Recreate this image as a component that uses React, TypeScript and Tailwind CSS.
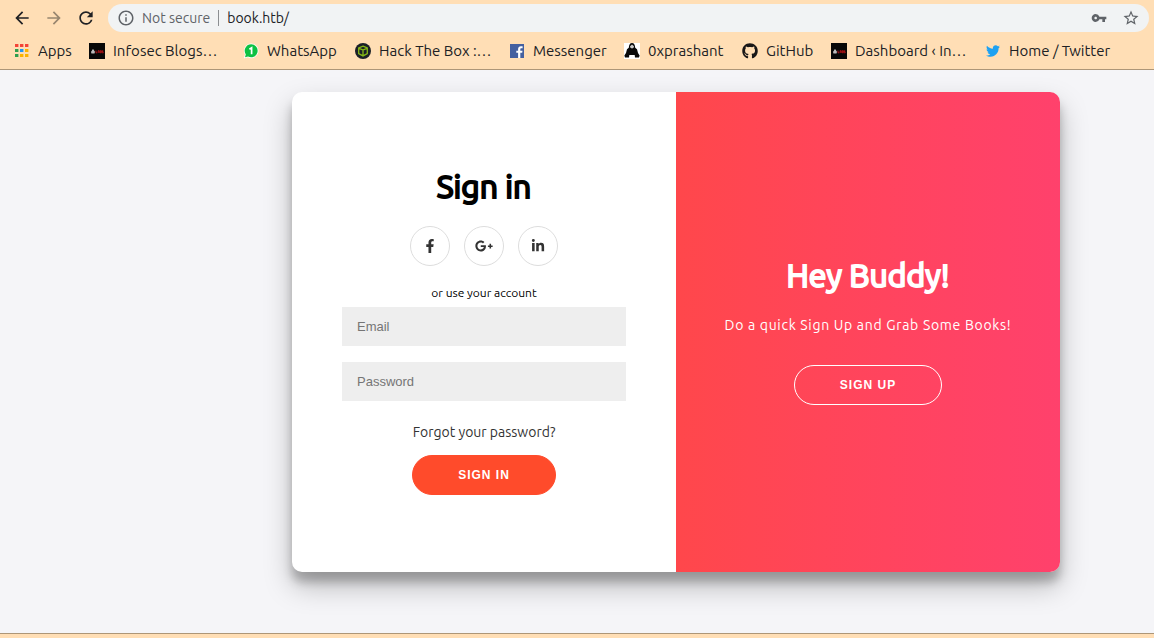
import type { ReactNode } from "react";
import { FaFacebookF, FaGithub, FaGooglePlusG, FaLinkedinIn, FaTwitter } from "react-icons/fa";
import { MdArrowBack, MdArrowForward, MdInfoOutline, MdRefresh, MdStarBorder, MdVpnKey } from "react-icons/md";

function AppsIcon() {
  const colors = ["#f44336", "#f44336", "#f44336", "#2f9e4f", "#2196f3", "#fbb300", "#2f9e4f", "#fbb300", "#fbb300"];
  return (
    <svg viewBox="0 0 16 16" className="size-4" aria-hidden="true">
      {colors.map((c, i) => (
        <rect key={i} x={1 + (i % 3) * 5} y={1 + Math.floor(i / 3) * 5} width="3.4" height="3" fill={c} />
      ))}
    </svg>
  );
}

function InfosecIcon() {
  return (
    <svg viewBox="0 0 16 16" className="size-4" aria-hidden="true">
      <rect width="16" height="16" fill="#080808" />
      <path d="M3.2 6.600h1.600l.4 1.200.8 1-.5 1.600H2.400L2 8.800l.9-1z" fill="#bbb" />
      <path d="M7 7.600v2.200h1.300M9.200 9.900V7.700h1v2.200M11.300 7.700v2.100h1V7.700zM14.200 7.800h-1v1h1v1h-1" fill="none" stroke="#d3171c" strokeWidth="0.8" />
    </svg>
  );
}

function WhatsAppIcon() {
  return (
    <svg viewBox="0 0 16 16" className="size-4" aria-hidden="true">
      <path d="M8.200.5a7.300 7.300 0 1 1-3.300 13.800L.8 15.400 2 11.500A7.300 7.300 0 0 1 8.200.5z" fill="#fff" />
      <path d="M8.200 1.300a6.500 6.500 0 1 1-3.200 12.200l-3 .8.800-2.900a6.500 6.500 0 0 1 5.400-10.100z" fill="#0dc143" />
      <path d="M6.400 6.200 8.600 4.800v6.400" fill="none" stroke="#fff" strokeWidth="1.700" />
    </svg>
  );
}

function HackTheBoxIcon() {
  return (
    <svg viewBox="0 0 16 16" className="size-4" aria-hidden="true">
      <circle cx="8" cy="8" r="8" fill="#1b2027" />
      <path d="M8 3.200 12.300 5v5.600L8 12.900l-4.300-2.300V5zM3.700 5.200 8 7l4.300-1.800M8 7v5.600" fill="none" stroke="#86b817" strokeWidth="1.300" />
    </svg>
  );
}

function FacebookIcon() {
  return (
    <svg viewBox="0 0 16 16" className="size-4" aria-hidden="true">
      <rect x="1" y="1" width="14" height="14" fill="#4460a0" />
      <path d="M9.100 15V9.800H7.300V7.700h1.800V6.100c0-1.900 1.100-2.900 2.800-2.900l1.700.1v1.900h-1.200c-.9 0-1.100.4-1.100 1.100v1.400h2.200l-.3 2.100h-1.900V15z" fill="#fff" />
    </svg>
  );
}

function HackerIcon() {
  return (
    <svg viewBox="0 0 16 16" className="size-4" aria-hidden="true">
      <rect width="16" height="16" fill="#fff" />
      <path d="M8 0c2 0 3 1.500 3.200 4.800L13 6.200l1 3.800 1.600 2.400-.6 2-4 .2-.3-2.600H5.300L5 14.600l-4-.2-.6-2L2 10l1-3.800 1.800-1.400C5 1.500 6 0 8 0z" fill="#090909" />
      <path d="M6 3.200 8 1.600l2 1.600-.4 1.600L8 5.600l-1.600-.8z" fill="#ccc" />
    </svg>
  );
}

type Bookmark = { label: string; icon: ReactNode; width: string };

const bookmarks: Bookmark[] = [
  { label: "Apps", icon: <AppsIcon />, width: "w-[75px]" },
  { label: "Infosec Blogs…", icon: <InfosecIcon />, width: "w-[154px]" },
  { label: "WhatsApp", icon: <WhatsAppIcon />, width: "w-28" },
  { label: "Hack The Box :…", icon: <HackTheBoxIcon />, width: "w-[154px]" },
  { label: "Messenger", icon: <FacebookIcon />, width: "w-[115px]" },
  { label: "0xprashant", icon: <HackerIcon />, width: "w-[118px]" },
  { label: "GitHub", icon: <FaGithub className="size-4 text-[#191717]" />, width: "w-[89px]" },
  { label: "Dashboard ‹ In…", icon: <InfosecIcon />, width: "w-[154px]" },
  { label: "Home / Twitter", icon: <FaTwitter className="size-[14px] text-[#1da1f2]" />, width: "w-[130px]" },
];

function BrowserBar() {
  return (
    <header className="border-b border-[#ad9678] bg-[#ffdeb5] text-[#202124]">
      <div className="flex items-center gap-3 pt-1 pr-[5px] pl-3">
        <div className="flex gap-3">
          <button type="button" aria-label="Back">
            <MdArrowBack className="size-5" />
          </button>
          <button type="button" aria-label="Forward" className="text-[#98866f]" disabled>
            <MdArrowForward className="size-5" />
          </button>
          <button type="button" aria-label="Reload">
            <MdRefresh className="size-5" />
          </button>
        </div>
        <div className="flex h-7 flex-1 items-center rounded-full bg-[#f1f3f4] px-[9px] text-sm">
          <MdInfoOutline className="size-[18px] text-[#5f6368]" />
          <span className="ml-[7px] whitespace-nowrap text-[#5f6368]">Not secure</span>
          <span className="mx-2 h-4 w-px bg-[#8b8e91]" />
          <input aria-label="Address" defaultValue="book.htb/" className="min-w-0 flex-1 bg-transparent outline-none" />
          <button type="button" aria-label="Saved passwords" className="text-[#5f6368]">
            <MdVpnKey className="size-4" />
          </button>
          <button type="button" aria-label="Bookmark this page" className="ml-[15px] text-[#5f6368]">
            <MdStarBorder className="size-[18px]" />
          </button>
        </div>
      </div>
      <nav aria-label="Bookmarks" className="flex h-[37px] items-center pl-[14px] text-[15px] leading-5">
        {bookmarks.map((b) => (
          <a key={b.label} href="#" className={`flex shrink-0 items-center gap-2 whitespace-nowrap ${b.width}`}>
            <span className="flex w-4 shrink-0 justify-center">{b.icon}</span>
            {b.label}
          </a>
        ))}
      </nav>
    </header>
  );
}

const social = [
  { label: "Facebook", icon: <FaFacebookF className="size-[14px]" /> },
  { label: "Google Plus", icon: <FaGooglePlusG className="size-[18px]" /> },
  { label: "LinkedIn", icon: <FaLinkedinIn className="size-[14px]" /> },
];

const titleClass = "text-[32px] leading-8 font-normal [-webkit-text-stroke:2px_currentColor]";
const fieldClass =
  "h-[39px] w-full bg-[#eee] px-[15px] font-['Liberation_Sans',Arial,sans-serif] text-[13px] outline-none placeholder:text-[#757575]";
const pillClass =
  "h-10 rounded-full border px-[45px] font-['Liberation_Sans',Arial,sans-serif] text-xs font-bold tracking-[1px] text-white";

export default function App() {
  return (
    <div className="flex min-h-screen flex-col bg-[#f6f5f7] font-[Ubuntu,'Noto_Sans',sans-serif]">
      <BrowserBar />
      <main className="flex flex-1 items-start justify-center bg-[#f5f5f8] pt-[22px] pl-[198px]">
        <div className="grid min-h-[480px] w-full max-w-3xl grid-cols-2 overflow-hidden rounded-[10px] bg-white shadow-[0_14px_28px_rgba(0,0,0,0.25),0_10px_10px_rgba(0,0,0,0.22)]">
          <form className="flex flex-col items-center justify-center px-[50px] text-center" onSubmit={(e) => e.preventDefault()}>
            <h1 className={`text-black ${titleClass}`}>Sign in</h1>
            <div className="mt-6 mb-5 flex gap-[14px]">
              {social.map((s) => (
                <a
                  key={s.label}
                  href="#"
                  aria-label={s.label}
                  className="flex size-10 items-center justify-center rounded-full border border-[#ddd] text-[#333]"
                >
                  {s.icon}
                </a>
              ))}
            </div>
            <span className="text-xs leading-[14px] text-black">or use your account</span>
            <input type="email" aria-label="Email" placeholder="Email" className={`mt-[7px] ${fieldClass}`} />
            <input type="password" aria-label="Password" placeholder="Password" className={`mt-4 ${fieldClass}`} />
            <a href="#" className="mt-[21px] mb-[13px] text-sm leading-5 text-[#333]">
              Forgot your password?
            </a>
            <button type="submit" className={`border-[#ff4b2b] bg-[#ff4b2b] ${pillClass}`}>
              SIGN IN
            </button>
          </form>
          <section className="flex flex-col items-center justify-center bg-linear-to-r from-[#ff474b] to-[#ff416c] px-10 text-center text-white">
            <h1 className={titleClass}>Hey Buddy!</h1>
            <p className="mt-6 mb-[30px] text-sm leading-5 tracking-wider whitespace-nowrap">Do a quick Sign Up and Grab Some Books!</p>
            <button type="button" className={`border-white bg-transparent ${pillClass}`}>
              SIGN UP
            </button>
          </section>
        </div>
      </main>
      <footer className="h-[5px] border-t border-[#ad9678] bg-[#ffdeb5]" />
    </div>
  );
}
